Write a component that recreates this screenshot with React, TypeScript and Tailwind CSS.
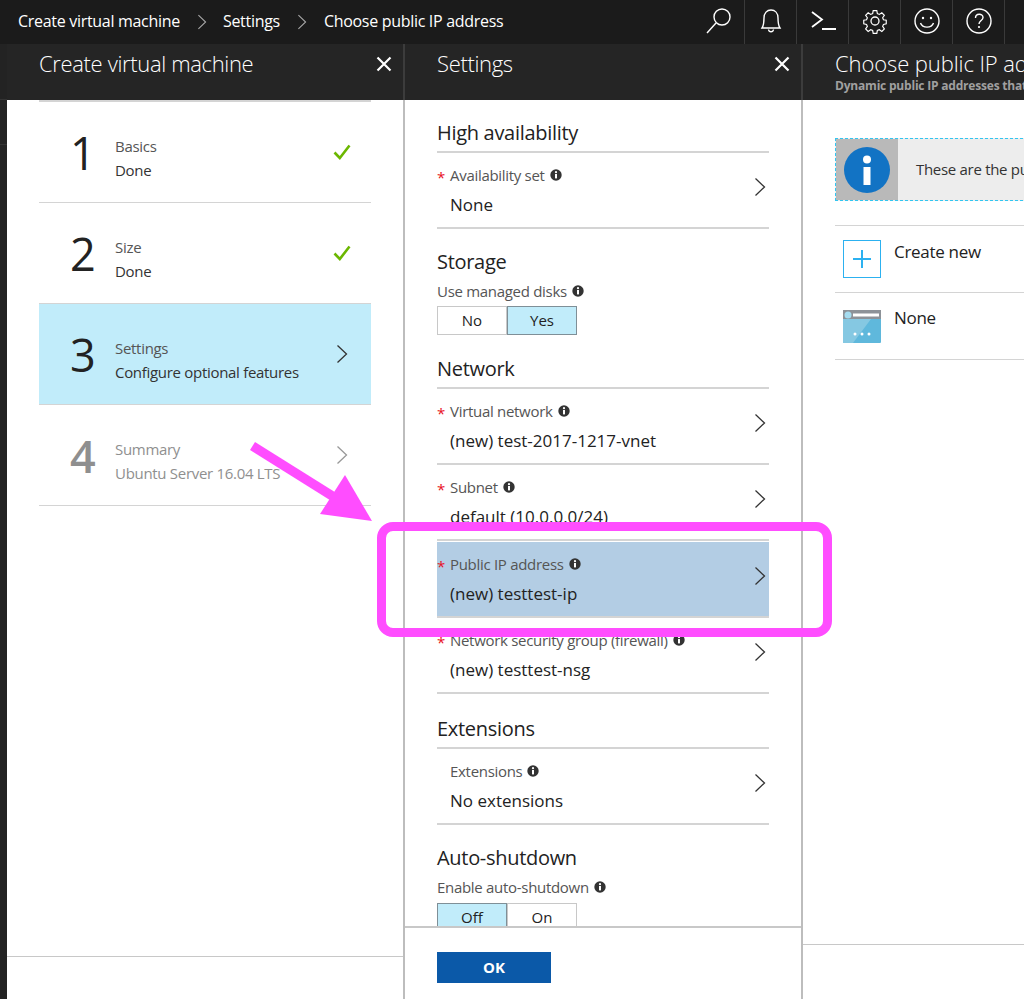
import React from "react";

const font = { fontFamily: '"Open Sans", "Noto Sans", sans-serif' };

function Chevron({ className = "text-[#333]" }: { className?: string }) {
  return (
    <svg width="12" height="20" viewBox="0 0 12 20" fill="none" stroke="currentColor" strokeWidth="1.3" className={className}>
      <path d="M1.5 1.500 10.500 10 1.500 18.500" />
    </svg>
  );
}

function InfoDot() {
  return (
    <svg width="12" height="12" viewBox="0 0 12 12" className="ml-[5px] shrink-0">
      <circle cx="6" cy="6" r="5.700" fill="#333" />
      <rect x="5" y="5" width="2" height="4.400" fill="#fff" />
      <circle cx="6" cy="3.200" r="1.100" fill="#fff" />
    </svg>
  );
}

function Close() {
  return (
    <svg width="16" height="16" viewBox="0 0 16 16" stroke="#fff" strokeWidth="2.200" className="shrink-0">
      <path d="M1.500 1.500 14.500 14.500M14.500 1.500 1.500 14.500" />
    </svg>
  );
}

function Check() {
  return (
    <svg width="18" height="16" viewBox="0 0 18 16" fill="none" stroke="#6bb700" strokeWidth="2.600" className="-ml-[3px]">
      <path d="M1.500 8.500 6.800 14 16.500 1.500" />
    </svg>
  );
}

function Step({ n, title, sub, state }: { n: string; title: string; sub: string; state: "done" | "active" | "off" }) {
  const off = state === "off";
  return (
    <div className={`flex h-[101px] items-center border-b border-[#d4d4d4] ${state === "active" ? "bg-[#c1ecfa]" : ""}`}>
      <div className={`w-[76px] pl-[31px] pt-[1px] text-[45px] leading-none ${off ? "text-[#8f8f8f] font-semibold" : "text-[#222] font-medium"}`}>{n}</div>
      <div className={`flex-1 pt-[12px] text-[15px] leading-[24px] tracking-[-0.3px] ${off ? "text-[#8f8f8f]" : "text-[#333]"}`}>
        <div className={off ? "" : "text-[#555]"}>{title}</div>
        <div>{sub}</div>
      </div>
      <div className="flex w-[35px] justify-start">
        {state === "done" ? <Check /> : <Chevron className={off ? "text-[#999]" : "text-[#333]"} />}
      </div>
    </div>
  );
}

function Field({ label, value, req = true, active = false }: { label: string; value: string; req?: boolean; active?: boolean }) {
  return (
    <div className={`relative flex h-[76px] items-center border-b-2 border-[#d4d4d4] ${active ? "mt-[1px] bg-[#b3cde4]" : ""}`}>
      <div className="flex-1 pl-[13px]">
        <div className="flex h-[22px] items-center text-[15px] tracking-[-0.3px] text-[#555]">
          {req && <span className="absolute left-0 top-[13px] text-[15px] text-[#e81123]">*</span>}
          {label}
          <InfoDot />
        </div>
        <div className="mt-2 text-[17px] leading-[22px] text-[#222]">{value}</div>
      </div>
      <div className="mb-[7px] pr-[3px]">
        <Chevron />
      </div>
    </div>
  );
}

function Heading({ children }: { children: React.ReactNode }) {
  return <div className="text-[20px] leading-[28px] tracking-[-0.3px] text-[#222]">{children}</div>;
}

function Toggle({ left, right, on }: { left: string; right: string; on: "left" | "right" }) {
  const base = "flex h-[29px] w-[70px] items-center justify-center text-[15px] text-[#222]";
  return (
    <div className="flex">
      <div className={`${base} border ${on === "left" ? "border-[#7f8f97] bg-[#c1ecfa]" : "border-[#c8c8c8]"}`}>{left}</div>
      <div className={`${base} border ${on === "right" ? "border-[#7f8f97] bg-[#c1ecfa]" : "border-[#c8c8c8]"}`}>{right}</div>
    </div>
  );
}

const tools = [
  <svg key="s" width="28" height="28" viewBox="0 0 28 28" fill="none" stroke="#fff" strokeWidth="1.400"><circle cx="17" cy="10" r="8" /><path d="M11 16 2 26" /></svg>,
  <svg key="b" width="24" height="28" viewBox="0 0 24 28" fill="none" stroke="#fff" strokeWidth="1.400"><path d="M3 21c2-3 2-6 2-10 0-5 3-8 7-8s7 3 7 8c0 4 0 7 2 10z" /><path d="M9.500 22.500c.5 3 4.500 3 5 0" /></svg>,
  <svg key="t" width="26" height="24" viewBox="0 0 26 24" fill="none" stroke="#fff" strokeWidth="1.800"><path d="M2 3 12 10.500 2 18M12 20H26" /></svg>,
  <svg key="g" width="26" height="26" viewBox="0 0 26 26" fill="none" stroke="#fff" strokeWidth="1.300"><path d="M11 1.500h4l.6 3.300 2.200.9 2.800-1.900 2.800 2.800-1.900 2.800.9 2.200 3.100.6v4l-3.100.6-.9 2.200 1.900 2.800-2.800 2.800-2.800-1.900-2.200.9-.6 3.100h-4l-.6-3.100-2.200-.9-2.800 1.900-2.800-2.800 1.900-2.800-.9-2.200-3.100-.6v-4l3.100-.6.9-2.200-1.900-2.800 2.800-2.800 2.800 1.900 2.200-.9z" transform="translate(1.300 1.300) scale(.9)" /><circle cx="13" cy="13" r="4" /></svg>,
  <svg key="f" width="26" height="26" viewBox="0 0 26 26" fill="none" stroke="#fff" strokeWidth="1.400"><circle cx="13" cy="13" r="12" /><path d="M6.500 15c2 5.500 11 5.500 13 0" /><circle cx="9" cy="10" r="1.200" fill="#fff" stroke="none" /><circle cx="17" cy="10" r="1.200" fill="#fff" stroke="none" /></svg>,
  <svg key="h" width="26" height="26" viewBox="0 0 26 26" fill="none" stroke="#fff" strokeWidth="1.400"><circle cx="13" cy="13" r="12" /><path d="M9.500 10c0-5 7.500-5 7.500-.5 0 3-4 3-4 6.500" /><circle cx="13" cy="19" r="1.100" fill="#fff" stroke="none" /></svg>,
];

export default function App() {
  return (
    <div style={font} className="relative flex h-[999px] w-[1024px] flex-col overflow-hidden bg-white">
      {/* top bar */}
      <div className="flex h-[44px] shrink-0 items-center bg-[#1b1b1b] pl-[18px] text-[16px] tracking-[-0.3px] text-white">
        <span className="pb-[3px]">Create virtual machine</span>
        <span className="ml-[17px] mr-[16px]"><Chevron className="h-[16px] w-[10px] text-[#aaa]" /></span>
        <span className="pb-[3px]">Settings</span>
        <span className="mx-[17px]"><Chevron className="h-[16px] w-[10px] text-[#aaa]" /></span>
        <span className="pb-[3px]">Choose public IP address</span>
        <div className="ml-auto flex h-full">
          {tools.map((t, i) => (
            <div key={i} className="flex h-full w-[52px] items-center justify-center border-r border-[#3a3a3a] pb-[2px]">
              {t}
            </div>
          ))}
          <div className="w-[19px]" />
        </div>
      </div>

      <div className="flex min-h-0 flex-1">
        {/* strip of the blade behind */}
        <div className="flex w-[7px] shrink-0 flex-col bg-[#232323]">
          <div className="h-[56px] border-b border-[#333]" />
          <div className="h-[45px] border-b border-[#333]" />
        </div>

        {/* blade 1 */}
        <div className="flex w-[396px] shrink-0 flex-col">
          <div className="flex h-[56px] shrink-0 items-start justify-between bg-[#252525] pl-[32px] pr-[11px] pt-[2px]">
            <span className="text-[22px] font-light leading-[34px] tracking-[-0.35px] text-white">Create virtual machine</span>
            <span className="pt-[10px]"><Close /></span>
          </div>
          <div className="flex flex-1 flex-col justify-between">
            <div className="px-[32px]">
              <div className="border-t-2 border-[#d4d4d4]">
                <Step n="1" title="Basics" sub="Done" state="done" />
                <Step n="2" title="Size" sub="Done" state="done" />
                <Step n="3" title="Settings" sub="Configure optional features" state="active" />
                <Step n="4" title="Summary" sub="Ubuntu Server 16.04 LTS" state="off" />
              </div>
            </div>
            <div className="h-[43px] border-t border-[#c8c8c8]" />
          </div>
        </div>

        {/* blade 2 */}
        <div className="flex w-[400px] shrink-0 flex-col border-x-2 border-[#bdbdbd]">
          <div className="-mx-[2px] flex h-[56px] shrink-0 items-start justify-between border-x-2 border-[#3c3c3c] bg-[#252525] pl-[32px] pr-[11px] pt-[2px]">
            <span className="text-[22px] font-light leading-[34px] tracking-[-0.35px] text-white">Settings</span>
            <span className="pt-[10px]"><Close /></span>
          </div>
          <div className="min-h-0 flex-1 overflow-hidden px-[32px] pt-[19px]">
            <Heading>High availability</Heading>
            <div className="mt-[4px] border-t-2 border-[#d4d4d4]">
              <Field label="Availability set" value="None" />
            </div>
            <div className="mt-[19px]"><Heading>Storage</Heading></div>
            <div className="mt-[4px] flex h-[22px] items-center text-[15px] tracking-[-0.3px] text-[#555]">Use managed disks<InfoDot /></div>
            <div className="mt-[4px]"><Toggle left="No" right="Yes" on="right" /></div>
            <div className="mt-[20px]"><Heading>Network</Heading></div>
            <div className="mt-[4px] border-t-2 border-[#d4d4d4]">
              <Field label="Virtual network" value="(new) test-2017-1217-vnet" />
              <Field label="Subnet" value="default (10.0.0.0/24)" />
              <Field label="Public IP address" value="(new) testtest-ip" active />
              <Field label="Network security group (firewall)" value="(new) testtest-nsg" />
            </div>
            <div className="mt-[21px]"><Heading>Extensions</Heading></div>
            <div className="mt-[4px] border-t-2 border-[#d4d4d4]">
              <Field label="Extensions" value="No extensions" req={false} />
            </div>
            <div className="mt-[19px]"><Heading>Auto-shutdown</Heading></div>
            <div className="mt-[4px] flex h-[22px] items-center text-[15px] tracking-[-0.3px] text-[#555]">Enable auto-shutdown<InfoDot /></div>
            <div className="mt-[5px]"><Toggle left="Off" right="On" on="left" /></div>
          </div>
          <div className="h-[73px] shrink-0 border-t-2 border-[#c8c8c8] pl-[32px] pt-[24px]">
            <div className="flex h-[31px] w-[114px] items-center justify-center bg-[#0b59a8] text-[15px] font-bold text-white">OK</div>
          </div>
        </div>

        {/* blade 3 */}
        <div className="flex min-w-[400px] shrink-0 flex-col">
          <div className="h-[56px] shrink-0 bg-[#252525] pl-[32px] pt-[2px]">
            <div className="whitespace-nowrap text-[22px] font-light leading-[34px] tracking-[-0.1px] text-white">Choose public IP address</div>
            <div className="mt-[-1px] whitespace-nowrap text-[12px] font-bold leading-[14px] tracking-[-0.2px] text-[#a0a0a0]">Dynamic public IP addresses that are available</div>
          </div>
          <div className="flex flex-1 flex-col justify-between">
            <div className="pl-[32px] pt-[38px]">
              <div className="flex h-[63px] items-stretch border border-dashed border-[#33c5f0] bg-[#ededed]">
                <div className="flex w-[62px] items-center justify-center bg-[#b9b9b9]">
                  <svg width="46" height="46" viewBox="0 0 46 46">
                    <circle cx="23" cy="23" r="23" fill="#1273c4" />
                    <circle cx="23" cy="12.500" r="4" fill="#fff" />
                    <rect x="19.500" y="20" width="7" height="18" fill="#fff" />
                  </svg>
                </div>
                <div className="flex items-center whitespace-nowrap pl-[18px] text-[15px] tracking-[-0.3px] text-[#333]">These are the public IP addresses</div>
              </div>
              <div className="mt-[24px] border-t border-[#d4d4d4]">
                <div className="flex h-[67px] border-b border-[#d4d4d4] pl-[8px] pt-[14px]">
                  <div className="flex h-[38px] w-[38px] items-center justify-center border border-[#2cb1f0]">
                    <svg width="18" height="18" viewBox="0 0 18 18" stroke="#2cb1f0" strokeWidth="2"><path d="M9 0V18M0 9H18" /></svg>
                  </div>
                  <div className="ml-[13px] text-[17px] leading-[24px] tracking-[-0.3px] text-[#222]">Create new</div>
                </div>
                <div className="flex h-[67px] border-b border-[#d4d4d4] pl-[8px] pt-[17px]">
                  <svg width="38" height="33" viewBox="0 0 38 33">
                    <rect width="38" height="33" rx="1" fill="#5fb8dc" />
                    <rect width="38" height="9" fill="#8d9298" />
                    <path d="M0 9H28L10 33H1a1 1 0 0 1-1-1z" fill="#85c8e2" />
                    <circle cx="5" cy="5" r="3.500" fill="#a5dcf0" />
                    <rect x="10" y="3.500" width="26" height="3" fill="#fff" />
                    <circle cx="12" cy="24" r="1.500" fill="#fff" />
                    <circle cx="19" cy="24" r="1.500" fill="#fff" />
                    <circle cx="26" cy="24" r="1.500" fill="#fff" />
                  </svg>
                  <div className="ml-[13px] text-[17px] leading-[16px] tracking-[-0.3px] text-[#222]">None</div>
                </div>
              </div>
            </div>
            <div className="h-[55px] border-t border-[#c8c8c8]" />
          </div>
        </div>
      </div>

      {/* pink annotation drawn over the page */}
      <div className="pointer-events-none absolute left-[377px] top-[522px] h-[115px] w-[455px] rounded-[16px] border-[9px] border-[#ff4dff]" />
      <svg className="pointer-events-none absolute left-0 top-0" width="1024" height="999" fill="#ff4dff">
        <path d="M250 450 255 442 338 494 333 502z" />
        <path d="M372 521 345 475 320 514z" />
      </svg>
    </div>
  );
}
